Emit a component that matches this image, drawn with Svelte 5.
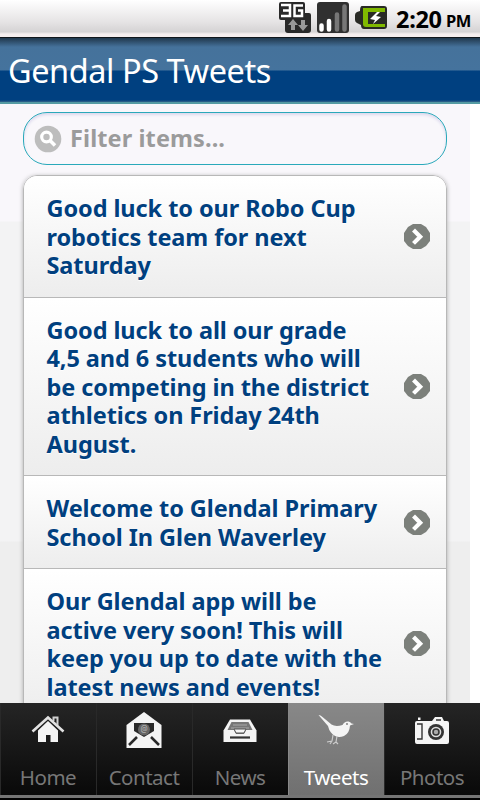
<script lang="ts">
  interface Tweet {
    lines: string[];
  }

  const tweets: Tweet[] = [
    { lines: ['Good luck to our Robo Cup', 'robotics team for next', 'Saturday'] },
    {
      lines: [
        'Good luck to all our grade',
        '4,5 and 6 students who will',
        'be competing in the district',
        'athletics on Friday 24th',
        'August.',
      ],
    },
    { lines: ['Welcome to Glendal Primary', 'School In Glen Waverley'] },
    {
      lines: [
        'Our Glendal app will be',
        'active very soon! This will',
        'keep you up to date with the',
        'latest news and events!',
      ],
    },
  ];

  const tabs: string[] = ['Home', 'Contact', 'News', 'Tweets', 'Photos'];

  let active: string = $state('Tweets');
  let filter: string = $state('');

  const shown = $derived(
    tweets.filter((t) => t.lines.join(' ').toLowerCase().includes(filter.toLowerCase())),
  );
</script>

<div class="phone">
  <div class="status">
    <svg class="net" width="32" height="33" viewBox="0 0 32 33">
      <path d="M2 1h22q2 0 2 2v9h4q2 0 2 2v15q0 3-3 3H9q-3 0-3-3V19H2q-2 0-2-2V3q0-2 2-2z" fill="#292929" />
      <path d="M2 4h9v11H2M4 9.500h7M24 4.500h-8.500V15H23V9.500h-4" fill="none" stroke="#fff" stroke-width="2.5" />
      <path d="M14 18l5 6h-3v5h-4v-5H9zM24 30l-5-6h3v-5h4v5h3z" fill="#999" />
    </svg>
    <svg class="signal" width="32" height="33" viewBox="0 0 32 33">
      <rect y="1" width="32" height="31" rx="3" fill="#303030" />
      <path d="M4.500 28.500v-4M12 28.500V20" stroke="#fff" stroke-width="4.500" stroke-linecap="round" />
      <path d="M20 28.500V13.500M27.500 28.500V5.500" stroke="#777" stroke-width="4.500" stroke-linecap="round" />
    </svg>
    <svg class="battery" width="32" height="25" viewBox="0 0 32 25">
      <path d="M7 1h22q3 0 3 3v17q0 3-3 3H9q-3 0-3-4l-4-2q-2-1-2-3v-5q0-2 2-3l3-1q0-5 2-5z" fill="#292a25" />
      <path d="M8 3h22v4H13v12h17v3H11q-3 0-3-3z" fill="#80b900" />
      <path d="M22 7l-7 7 5 1-2 4 8-7-5-1 4-4z" fill="#fff" />
    </svg>
    <span class="clock">2:20</span>
    <span class="meridiem">PM</span>
  </div>

  <header><h1>Gendal PS Tweets</h1></header>

  <main>
    <div class="page">
      <label class="search">
        <svg width="28" height="28" viewBox="0 0 28 28">
          <circle cx="14" cy="14" r="13.3" fill="#bdbdbd" />
          <circle cx="12.5" cy="12" r="4.800" fill="none" stroke="#fff" stroke-width="3.2" />
          <path d="M15.500 15l5.500 5.500" stroke="#fff" stroke-width="3.6" />
        </svg>
        <input type="text" placeholder="Filter items..." bind:value={filter} />
      </label>

      <ul>
        {#each shown as tweet}
          <li>
            <p>
              {#each tweet.lines as line}
                <span>{line}</span>
              {/each}
            </p>
            <svg class="arrow" width="28" height="28" viewBox="0 0 28 28">
              <path d="M10 1h8l5 3 4 6v8l-4 5-5 3h-8l-5-3-4-5v-8l4-6z" fill="#7c807b" />
              <path d="M12 8.500l5.200 5.200-5.200 5.200" fill="none" stroke="#fff" stroke-width="4.200" stroke-linecap="square" />
            </svg>
          </li>
        {/each}
      </ul>
    </div>
  </main>

  <nav>
    {#each tabs as tab}
      <button type="button" class:active={tab === active} onclick={() => (active = tab)}>
        <svg width="36" height="36" viewBox="0 0 36 36" fill="#f4f4f4">
          {#if tab === 'Home'}
            <path d="M18 9L8 18.500V30h8v-7h4.500v7H28V18.500z" />
            <path d="M2.500 19.500L18 5.500l15.500 14" fill="none" stroke="#e2e2e2" stroke-width="2.600" />
            <path d="M23.500 9V5.500h4V13" fill="none" stroke="#d0d0d0" stroke-width="2" />
          {:else if tab === 'Contact'}
            <path d="M18 0l17.500 13v23H.5V13z" />
            <path d="M8 11h20v8l-10 6-10-6z" fill="#292929" />
            <circle cx="18" cy="17.500" r="6" fill="#666" />
            <text x="18" y="20" text-anchor="middle" class="at">@</text>
            <path d="M3 33l8-8M33 33l-8-8" stroke="#292929" stroke-width="2.500" />
          {:else if tab === 'News'}
            <path d="M8 7.500h20l6.500 11V30h-33V18.500z" />
            <path d="M9.500 10h17l4 8H24l-2 4h-8l-2-4H5.500z" fill="#777" />
            <path d="M11 13h14M9 16h18" stroke="#aaa" />
            <path d="M12 17h12l-2 4h-8z" fill="#f4f4f4" stroke="#555" />
            <path d="M8 25.500h20" stroke="#333" stroke-width="2.200" />
          {:else if tab === 'Tweets'}
            <path d="M0.500 3q2 0 4 2l9 7.500q4 2.500 11 .5 2-4 6-3.500 2 .5 3 2l2.500.5-4 1.500q-.5 8-6 10.500-8 3-13-3.500-2-2-3-6.500z" />
            <path d="M15 23l-1 6-5 1m5-1l-2 3m7-8l-1 6-3 2m3-2l2 2" fill="none" stroke="#ccc" stroke-width="1.200" />
            <circle cx="29" cy="12" r="0.900" fill="#777" />
          {:else}
            <path d="M3 9h15l3-4h7l2 4h3q2 0 2 2v19q0 2-2 2H3q-2 0-2-2V11q0-2 2-2z" />
            <path d="M22 8h5M3 12h5v15H3" fill="none" stroke="#333" stroke-width="1.400" />
            <circle cx="22" cy="20" r="8" fill="#333" />
            <circle cx="22" cy="20" r="5.300" fill="#ddd" />
            <circle cx="22" cy="20" r="3" fill="#aaa" stroke="#333" stroke-width="1.500" />
            <path d="M4 8V5.500h2.500V8z" />
          {/if}
        </svg>
        <span>{tab}</span>
      </button>
    {/each}
  </nav>
</div>

<style>
  :global(body) {
    margin: 0;
    background: #000;
  }

  .phone {
    display: flex;
    flex-direction: column;
    width: 480px;
    height: 800px;
    overflow: hidden;
    background: #fff;
    font-family: 'Noto Sans', 'Open Sans', sans-serif;
  }

  .status {
    display: flex;
    flex: none;
    box-sizing: border-box;
    height: 38px;
    padding: 1px 0 0 279px;
    border-bottom: 1px solid #10161b;
    background: linear-gradient(#fff, #e5e3e4 60%, #d5d3d4 86%, #f5eeee 92%, #f5eeee);
    color: #000;
    font-weight: 700;
    line-height: 36px;
    white-space: nowrap;
  }

  .signal {
    margin-left: 6px;
  }

  .battery {
    margin: 4px 0 0 6px;
  }

  .clock {
    width: 50px;
    margin-left: 9px;
    font-size: 23.5px;
    letter-spacing: -0.3px;
  }

  .meridiem {
    font-size: 16.5px;
    line-height: 40px;
    letter-spacing: -0.4px;
  }

  header {
    flex: none;
    box-sizing: border-box;
    height: 66px;
    padding-left: 8px;
    border-bottom: 2px solid #559ba3;
    background: linear-gradient(#20374c, #45729b 9px, #45739d 32px, #004080 33px, #004080 62px, #35658b);
  }

  h1 {
    margin: 0;
    color: #fff;
    font-size: 32.5px;
    font-weight: 400;
    line-height: 66px;
    letter-spacing: -0.45px;
    white-space: nowrap;
  }

  main {
    flex: 1;
    min-height: 0;
    overflow: hidden;
  }

  .page {
    box-sizing: border-box;
    width: 470px;
    height: 600px;
    padding: 8px 23px 0;
    background: linear-gradient(#f9f7fb, #f9f7fb 117px, #f3f3f4 118px, #f3f3f4 437px, #eee 438px);
  }

  .search {
    display: flex;
    align-items: center;
    box-sizing: border-box;
    height: 53px;
    padding-left: 10px;
    border: 1px solid #2aa9ba;
    border-radius: 24px;
    box-shadow: inset 0 2px 3px #ddd9ed;
  }

  input {
    width: 300px;
    margin: 0 0 2px 8px;
    padding: 0;
    border: 0;
    outline: none;
    background: none;
    font: 700 23.5px 'Noto Sans', 'Open Sans', sans-serif;
    letter-spacing: 0.1px;
  }

  input::placeholder {
    color: #9b9b9b;
    opacity: 1;
  }

  ul {
    margin: 10px 0 0;
    padding: 0;
    border: 1px solid #b8b8b8;
    border-radius: 14px 14px 0 0;
    box-shadow: 0 1px 4px #aaa;
    list-style: none;
    overflow: hidden;
  }

  li {
    display: flex;
    align-items: center;
    justify-content: space-between;
    padding: 17px 15px 17px 22.5px;
    border-top: 1px solid #fff;
    border-bottom: 1px solid #b8b8b8;
    background: linear-gradient(#fff, #ededed);
  }

  p {
    margin: 0;
    color: #00407f;
    font-size: 23.5px;
    font-weight: 700;
    line-height: 28.5px;
    letter-spacing: -0.08px;
    text-shadow: 0 1px 1px #fff;
    white-space: nowrap;
  }

  p span {
    display: block;
  }

  .arrow {
    flex: none;
  }

  nav {
    display: grid;
    flex: none;
    grid-template-columns: repeat(5, 1fr);
    height: 92px;
    border-bottom: 3px solid #747474;
    box-shadow: 0 3px #000;
    margin-bottom: 2px;
  }

  button {
    display: flex;
    flex-direction: column;
    align-items: center;
    padding: 9px 1px 0 0;
    border: 0;
    border-left: 1px solid #292929;
    background: linear-gradient(#252525, #090909);
    color: #777;
    font: 400 20.5px/30px 'Noto Sans', 'Open Sans', sans-serif;
    letter-spacing: -0.5px;
  }

  button.active {
    border-color: #888;
    background: linear-gradient(#888, #707070);
    color: #fff;
  }

  button span {
    margin-top: 14px;
  }

  .at {
    fill: #bbb;
    font-size: 8px;
    letter-spacing: 0;
  }
</style>
